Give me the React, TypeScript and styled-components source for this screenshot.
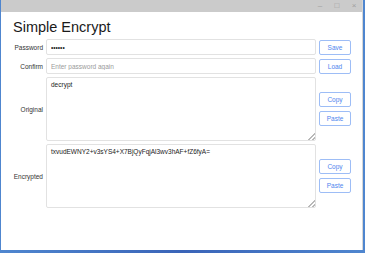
import React from "react";
import styled, { createGlobalStyle } from "styled-components";

const Global = createGlobalStyle`
  html, body { margin: 0; padding: 0; }
  body {
    width: 365px;
    height: 253px;
    overflow: hidden;
    background: linear-gradient(90deg, #4f86cf 0%, #3a64b8 50%, #4f86cf 100%);
    font-family: "Liberation Sans", Arial, sans-serif;
  }
`;

const Window = styled.div`
  margin-left: 1px;
  width: 362px;
  height: 250px;
  background: #ffffff;
  display: flex;
  flex-direction: column;
  box-sizing: border-box;
  border-right: 1px solid #d6d6d6;
`;

const TitleBar = styled.div`
  height: 12px;
  background: #cbcbcb;
  display: flex;
  justify-content: flex-end;
  align-items: center;
  gap: 9px;
  padding-right: 4px;
  color: #a0a0a0;
  font-size: 8px;
  line-height: 12px;
`;

const WinGlyph = styled.span`
  width: 8px;
  text-align: center;
`;

const Content = styled.div`
  padding: 7px 11px 0 12px;
  display: flex;
  flex-direction: column;
  gap: 3px;
`;

const Heading = styled.h1`
  margin: 0;
  font-size: 14.5px;
  line-height: 17px;
  font-weight: 400;
  color: #1a1a1a;
`;

const Form = styled.div`
  display: grid;
  grid-template-columns: 30px 270px 32px;
  grid-template-rows: 16px 16px 64px 64px;
  column-gap: 3px;
  row-gap: 3px;
  align-items: center;
`;

const Label = styled.label`
  font-size: 6.5px;
  color: #333;
  text-align: right;
  justify-self: end;
  white-space: nowrap;
`;

const Input = styled.input`
  box-sizing: border-box;
  height: 16px;
  width: 100%;
  border: 1px solid #e2e2e2;
  border-radius: 2px;
  padding: 0 4px;
  font-family: "Liberation Sans", Arial, sans-serif;
  font-size: 6.5px;
  color: #222;
  outline: none;
  &::placeholder { color: #9a9a9a; }
`;

const Area = styled.textarea`
  box-sizing: border-box;
  height: 64px;
  width: 100%;
  border: 1px solid #e2e2e2;
  border-radius: 2px;
  padding: 3px 4px;
  font-family: "Liberation Sans", Arial, sans-serif;
  font-size: 6.5px;
  color: #222;
  outline: none;
  resize: vertical;
  margin: 0;
  &::-webkit-resizer {
    background: linear-gradient(135deg, transparent 0 76%, #b8b8b8 76% 82%, transparent 82% 88%, #b8b8b8 88% 94%, transparent 94%);
  }
`;

const ButtonStack = styled.div`
  display: flex;
  flex-direction: column;
  gap: 4px;
`;

const Button = styled.button`
  box-sizing: border-box;
  width: 32px;
  height: 15px;
  padding: 0;
  background: #fff;
  border: 1px solid #9dbdf6;
  border-radius: 2px;
  color: #4f86ee;
  font-family: "Liberation Sans", Arial, sans-serif;
  font-size: 6.5px;
  cursor: pointer;
`;

export default function App() {
  return (
    <>
      <Global />
      <Window>
        <TitleBar>
          <WinGlyph>–</WinGlyph>
          <WinGlyph>□</WinGlyph>
          <WinGlyph>×</WinGlyph>
        </TitleBar>
        <Content>
          <Heading>Simple Encrypt</Heading>
          <Form>
            <Label>Password</Label>
            <Input type="password" defaultValue="secret" />
            <Button>Save</Button>

            <Label>Confirm</Label>
            <Input placeholder="Enter password again" />
            <Button>Load</Button>

            <Label>Original</Label>
            <Area defaultValue="decrypt" />
            <ButtonStack>
              <Button>Copy</Button>
              <Button>Paste</Button>
            </ButtonStack>

            <Label>Encrypted</Label>
            <Area defaultValue="txvudEWNY2+v3sYS4+X7BjQyFqjAl3wv3hAF+fZ6fyA=" />
            <ButtonStack>
              <Button>Copy</Button>
              <Button>Paste</Button>
            </ButtonStack>
          </Form>
        </Content>
      </Window>
    </>
  );
}
